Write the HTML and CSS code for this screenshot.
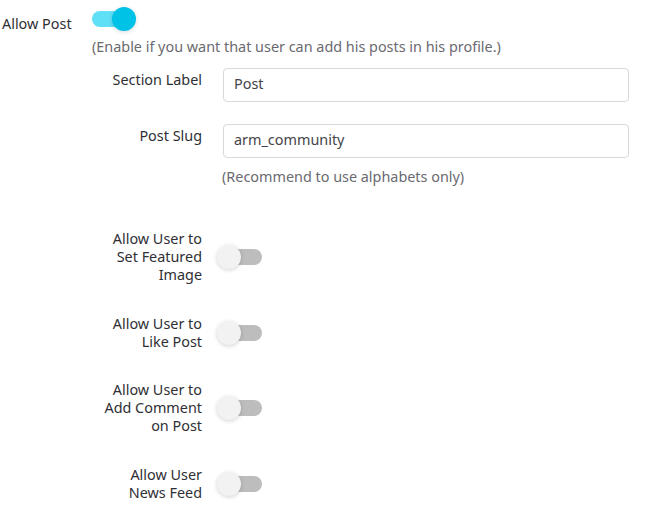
FILE: index.html
```html
<!DOCTYPE html>
<html>
<head>
<meta charset="utf-8">
<link rel="stylesheet" href="styles.css">
</head>
<body>
<div class="page">
  <div class="main-row">
    <span class="main-label">Allow Post</span>
    <span class="switch on"></span>
  </div>
  <p class="hint main-hint">(Enable if you want that user can add his posts in his profile.)</p>

  <div class="form">
    <div class="row field-row">
      <label class="lbl">Section Label</label>
      <div class="ctl"><input class="txt" type="text" value="Post"></div>
    </div>
    <div class="row field-row slug-row">
      <label class="lbl">Post Slug</label>
      <div class="ctl">
        <input class="txt" type="text" value="arm_community">
        <p class="hint slug-hint">(Recommend to use alphabets only)</p>
      </div>
    </div>

    <div class="row toggle-row first-toggle">
      <label class="lbl">Allow User to<br>Set Featured<br>Image</label>
      <div class="ctl"><span class="switch"></span></div>
    </div>
    <div class="row toggle-row">
      <label class="lbl">Allow User to<br>Like Post</label>
      <div class="ctl"><span class="switch"></span></div>
    </div>
    <div class="row toggle-row">
      <label class="lbl">Allow User to<br>Add Comment<br>on Post</label>
      <div class="ctl"><span class="switch"></span></div>
    </div>
    <div class="row toggle-row">
      <label class="lbl">Allow User<br>News Feed</label>
      <div class="ctl"><span class="switch"></span></div>
    </div>
  </div>
</div>
</body>
</html>
```

FILE: styles.css
```css
html, body {
  margin: 0;
  padding: 0;
  background: #ffffff;
}

body {
  font-family: "Noto Sans", "Open Sans", sans-serif;
  font-size: 14.4px;
  line-height: 18px;
  color: #2f2f35;
}

.page {
  display: flex;
  flex-direction: column;
  padding-top: 7px;
}

.main-row {
  display: flex;
  align-items: flex-start;
  padding-left: 2px;
}

.main-label {
  margin-top: 8px;
  width: 90px;
}

.hint {
  margin: 0;
  color: #6a6a70;
}

.main-hint {
  margin-top: 5px;
  margin-left: 92px;
}

.form {
  display: flex;
  flex-direction: column;
  margin-top: 12px;
}

.row {
  display: flex;
  gap: 20px;
}

.lbl {
  width: 100px;
  margin-left: 102px;
  text-align: right;
  flex-shrink: 0;
}

.ctl {
  display: flex;
  flex-direction: column;
}

.field-row .lbl {
  padding-top: 3px;
}

.slug-row {
  margin-top: 22px;
}

.txt {
  box-sizing: border-box;
  width: 406px;
  height: 34px;
  margin: 0 0 0 1px;
  padding: 0 10px 3px;
  border: 1px solid #d9d9dc;
  border-radius: 4px;
  font-family: "Noto Sans", "Open Sans", sans-serif;
  font-size: 14.4px;
  color: #444449;
  background: #fff;
  outline: none;
}

.slug-hint {
  margin-top: 10px;
}

.toggle-row {
  align-items: center;
  margin-top: 30.4px;
}

.first-toggle {
  margin-top: 44.4px;
}

.switch {
  position: relative;
  display: block;
  width: 40px;
  height: 16px;
  border-radius: 8px;
  background: #bdbdbd;
  margin: 4px 0;
}

.switch::after {
  content: "";
  position: absolute;
  top: -4px;
  left: -5px;
  width: 24px;
  height: 24px;
  border-radius: 50%;
  background: #f2f2f2;
  box-shadow: 0 1px 4px rgba(0, 0, 0, 0.18);
}

.main-row .switch {
  margin: 4px 0;
}

.switch.on {
  background: #5fe0f6;
}

.switch.on::after {
  left: 20px;
  background: #00c1e6;
  box-shadow: 0 1px 4px rgba(0, 0, 0, 0.15);
}
```
